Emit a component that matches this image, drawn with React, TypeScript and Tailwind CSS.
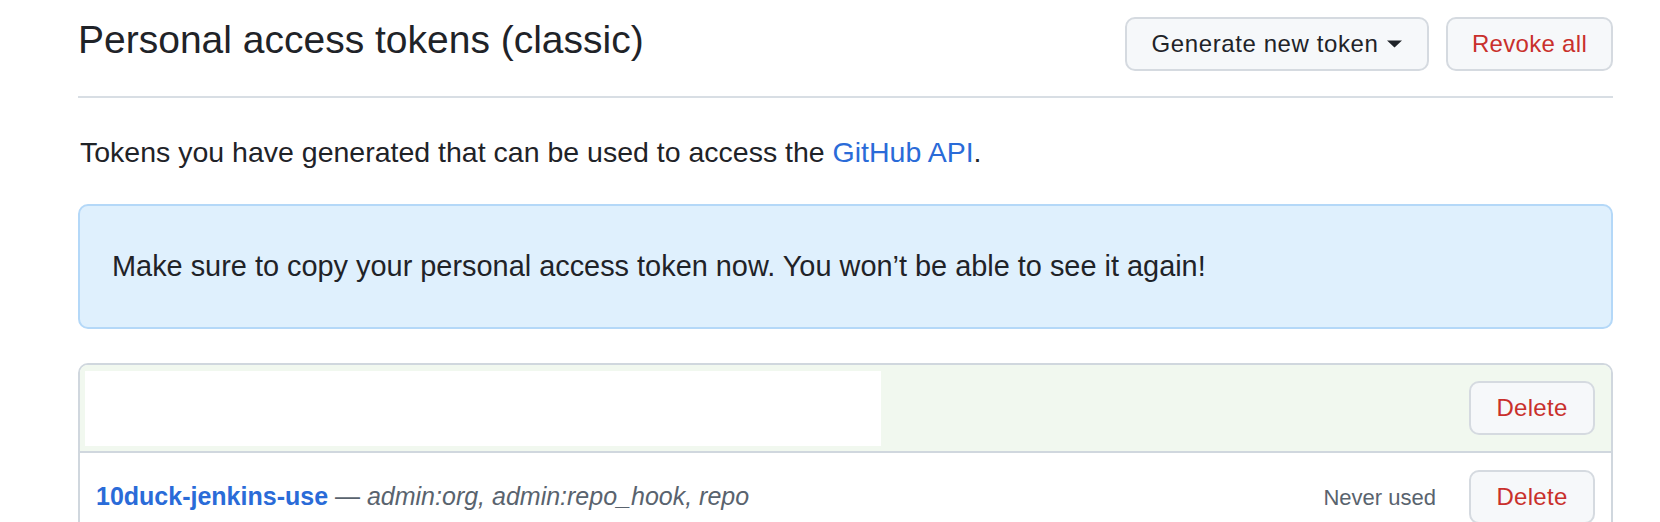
function TriangleDown() {
	return (
		<svg
			aria-hidden="true"
			className="ml-[9px] shrink-0"
			fill="#1f2328"
			height="8"
			viewBox="0 0 15 8"
			width="15"
		>
			<path d="M0 0.5h15L7.5 7.5z" />
		</svg>
	);
}

function Button({
	children,
	className = "",
	danger = false,
}: {
	children: React.ReactNode;
	className?: string;
	danger?: boolean;
}) {
	return (
		<button
			className={`flex h-[54px] shrink-0 items-center justify-center rounded-[10px] border-2 border-[#d5dae0] bg-[#f6f8fa] text-[24px] font-medium ${
				danger ? "text-[#c9302c]" : "text-[#1f2328]"
			} ${className}`}
			type="button"
		>
			{children}
		</button>
	);
}

export default function App() {
	return (
		<div
			className="h-[522px] w-[1660px] overflow-hidden bg-white text-[#1f2328]"
			style={{ fontFamily: '"Liberation Sans", Arial, sans-serif' }}
		>
			<div className="ml-[78px] w-[1535px] pt-[15px]">
				<div className="flex items-start justify-between border-b-2 border-[#d8dee4] pb-[25px]">
					<h2 className="text-[39px] font-normal leading-[50px]">
						Personal access tokens (classic)
					</h2>
					<div className="mt-[2px] flex gap-[17px]">
						<Button className="w-[304px] tracking-[0.6px]">
							Generate new token
							<TriangleDown />
						</Button>
						<Button className="w-[167px] tracking-[0.3px]" danger>
							Revoke all
						</Button>
					</div>
				</div>

				<p className="mt-[33px] pl-[2px] text-[28.5px] leading-[42px]">
					Tokens you have generated that can be used to access the{" "}
					<a className="text-[#2a6bd8]" href="#api">
						GitHub API
					</a>
					.
				</p>

				<div className="mt-[31px] flex h-[125px] items-center rounded-[10px] border-2 border-[#b4d8f8] bg-[#dff0fd] px-[32px] text-[28.9px]">
					Make sure to copy your personal access token now. You won’t be
					able to see it again!
				</div>

				<div className="mt-[34px] rounded-[10px] border-2 border-[#d0d7de]">
					<div className="flex h-[88px] items-center justify-between rounded-t-[8px] border-b-2 border-[#d0d7de] bg-[#f1f8ef] pl-[5px] pr-[16px]">
						<div className="h-[75px] w-[796px] bg-white" />
						<Button className="w-[126px] tracking-[0.3px]" danger>
							Delete
						</Button>
					</div>
					<div className="flex items-center justify-between py-[17px] pl-[16px] pr-[16px]">
						<div className="text-[25px] text-[#59636e]">
							<a className="font-bold text-[#2a6bd8]" href="#token">
								10duck-jenkins-use
							</a>{" "}
							— <em>admin:org, admin:repo_hook, repo</em>
						</div>
						<div className="flex items-center gap-[33px]">
							<span className="text-[22px] text-[#59636e]">Never used</span>
							<Button className="w-[126px] tracking-[0.3px]" danger>
								Delete
							</Button>
						</div>
					</div>
				</div>
			</div>
		</div>
	);
}
